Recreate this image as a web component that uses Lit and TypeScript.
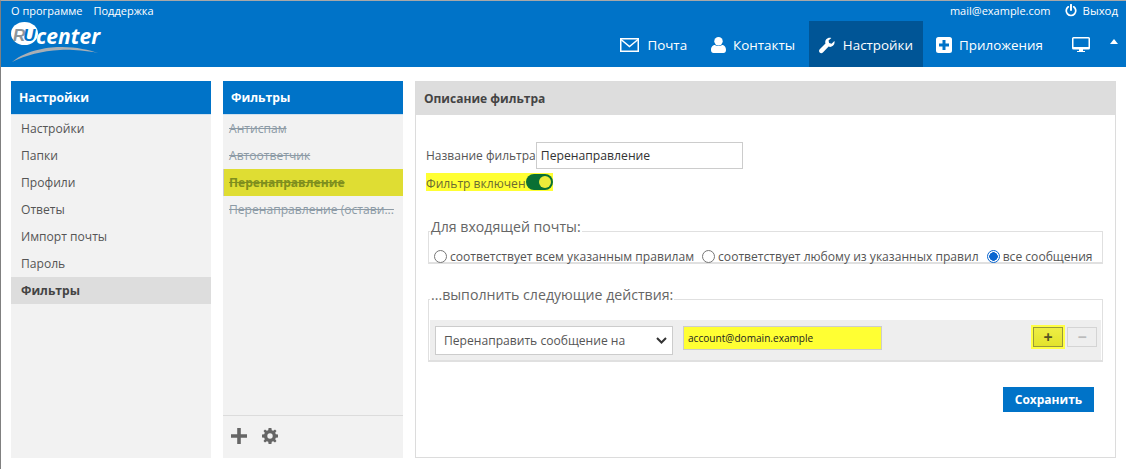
import { LitElement, html, css } from "lit";
import { customElement } from "lit/decorators.js";

const envelope = html`<svg width="19" height="14" viewBox="0 0 19 14"><rect x="0.75" y="0.75" width="17.5" height="12.5" fill="none" stroke="#fff" stroke-width="1.5"/><path d="M1 1.5 L9.5 8.5 L18 1.5" fill="none" stroke="#fff" stroke-width="1.5"/></svg>`;
const person = html`<svg width="15" height="16" viewBox="0 0 15 16"><ellipse cx="7.5" cy="4.2" rx="4.2" ry="4.2" fill="#fff"/><path d="M0 13 C0 9.5 2 8 4 8 C5.5 9.4 9.5 9.4 11 8 C13 8 15 9.5 15 13 C15 15 14 16 12.5 16 H2.5 C1 16 0 15 0 13Z" fill="#fff"/></svg>`;
const wrench = html`<svg width="17" height="17" viewBox="0 0 17 17"><path d="M16.6 3.6 L13.6 6.5 L10.9 5.9 L10.3 3.2 L13.3 0.4 C11.2 -0.3 9 0.3 7.8 1.8 C6.7 3.1 6.4 4.8 7 6.4 L0.8 12.6 C-0.2 13.6 -0.2 15.1 0.7 16 C1.7 17 3.2 17 4.2 16 L10.4 9.7 C12 10.3 13.7 10 15 8.8 C16.5 7.5 17.1 5.5 16.6 3.6Z" fill="#fff"/></svg>`;
const plusBox = html`<svg width="16" height="16" viewBox="0 0 16 16"><path fill-rule="evenodd" d="M2.5 0 H13.5 A2.5 2.5 0 0 1 16 2.5 V13.5 A2.5 2.5 0 0 1 13.5 16 H2.5 A2.5 2.5 0 0 1 0 13.5 V2.5 A2.5 2.5 0 0 1 2.5 0Z M6.5 3 V6.5 H3 V9.5 H6.5 V13 H9.5 V9.5 H13 V6.5 H9.5 V3Z" fill="#fff"/></svg>`;
const monitor = html`<svg width="18" height="16" viewBox="0 0 18 16"><path fill-rule="evenodd" d="M1.5 0 H16.5 A1.5 1.5 0 0 1 18 1.5 V11 A1.5 1.5 0 0 1 16.5 12.5 H11 V14 H13 V15 H5 V14 H7 V12.5 H1.5 A1.5 1.5 0 0 1 0 11 V1.5 A1.5 1.5 0 0 1 1.5 0Z M1.5 1.5 V10 H16.5 V1.5Z" fill="#fff"/></svg>`;
const power = html`<svg width="12" height="13" viewBox="0 0 11 12"><path d="M3 2.6 A4.4 4.4 0 1 0 8 2.6" fill="none" stroke="#fff" stroke-width="1.6" stroke-linecap="round"/><path d="M5.5 0.8 V5.6" stroke="#fff" stroke-width="1.8" stroke-linecap="round"/></svg>`;
const gear = html`<svg width="16" height="16" viewBox="0 0 16 16"><path fill-rule="evenodd" d="M6.6 0 H9.4 L9.8 2.2 L11.2 2.8 L13 1.5 L14.5 3 L13.2 4.8 L13.8 6.2 L16 6.6 V9.4 L13.8 9.8 L13.2 11.2 L14.5 13 L13 14.5 L11.2 13.2 L9.8 13.8 L9.4 16 H6.6 L6.2 13.8 L4.8 13.2 L3 14.5 L1.5 13 L2.8 11.2 L2.2 9.8 L0 9.4 V6.6 L2.2 6.2 L2.8 4.8 L1.5 3 L3 1.5 L4.8 2.8 L6.2 2.2Z M8 5.3 A2.7 2.7 0 1 0 8 10.7 A2.7 2.7 0 1 0 8 5.3Z" fill="#666"/></svg>`;
const bigPlus = html`<svg width="16" height="16" viewBox="0 0 16 16"><path d="M6.2 0 H9.8 V6.2 H16 V9.8 H9.8 V16 H6.2 V9.8 H0 V6.2 H6.2Z" fill="#666"/></svg>`;

const logo = html`<svg class="logo-mark" width="92" height="42" viewBox="0 0 92 42">
  <ellipse cx="14.5" cy="12.5" rx="13.5" ry="11.5" fill="#fff"/>
  <path d="M2 41 C18 28 40 26 52 26 C66 26 80 29 88 32 C72 29 60 28.5 50 29 C32 30 16 34 2 41Z" fill="#a9afb5"/>
</svg>`;

@customElement("app-root")
export class AppRoot extends LitElement {
  static styles = css`
    :host {
      display: block;
      width: 1126px;
      height: 469px;
      box-sizing: border-box;
      background: #fff;
      border-left: 1px solid #808080;
      border-top: 1px solid #a8a8a8;
      font-family: "Open Sans", sans-serif;
      font-size: 12.1px;
      color: #555;
      overflow: hidden;
    }
    .header {
      height: 66px;
      background: #0073c8;
      color: #fff;
      display: flex;
      flex-direction: column;
    }
    .top {
      height: 20px;
      flex: none;
      display: flex;
      align-items: center;
      justify-content: space-between;
      font-size: 11px;
      padding: 0 8px 2px 10px;
      box-sizing: border-box;
    }
    .top-l { display: flex; gap: 11px; }
    .top-r { display: flex; align-items: center; }
    .exit { display: flex; align-items: center; gap: 6px; margin-left: 14px; }
    .exit span { font-size: 11.4px; }
    .main { flex: 1; display: flex; justify-content: space-between; }
    .brand { position: relative; width: 100px; height: 46px; }
    .logo-mark { position: absolute; left: 9px; top: 0; }
    .ru {
      position: absolute; left: 12px; top: 5px;
      font: italic 700 17px "Liberation Sans", sans-serif;
      color: #8d959c; letter-spacing: -2px;
    }
    .ru-u { color: #0073c8; }
    .center {
      position: absolute; left: 35px; top: 1px;
      font: italic 700 21px "Open Sans", sans-serif;
      color: #fff; letter-spacing: 0.1px;
    }
    .nav { display: flex; align-items: stretch; }
    .tab {
      display: flex; align-items: center; gap: 8px;
      font-size: 13.4px;
      padding-top: 2px;
    }
    .tab.mail { margin-right: 24px; }
    .tab.con { margin-right: 14px; gap: 7px; }
    .tab.active { background: #005596; padding: 2px 10px 0; width: 114px; box-sizing: border-box; gap: 8px; white-space: nowrap; }
    .tab.apps { margin-left: 13px; gap: 7px; }
    .mon { display: flex; align-items: center; padding: 2px 0 0 29px; }
    .caret {
      width: 0; height: 0;
      border-left: 4px solid transparent;
      border-right: 4px solid transparent;
      border-bottom: 5px solid #fff;
      margin: 18px 8px 0 20px;
    }
    .body {
      display: flex;
      gap: 12px;
      padding: 14px 9px 0 10px;
      height: 377px;
    }
    .col {
      background: #f2f2f2;
      height: 377px;
      display: flex;
      flex-direction: column;
    }
    .c1 { width: 200px; }
    .c2 { width: 180px; }
    .head {
      height: 32px;
      flex: none;
      background: #0073c8;
      color: #fff;
      font-weight: 700;
      font-size: 12.2px;
      display: flex;
      align-items: center;
      padding: 0 0 1px 8px;
      border-bottom: 1px solid #cfe0ee;
      box-sizing: content-box;
    }
    .list { flex: 1; }
    .item {
      height: 27px;
      display: flex;
      align-items: center;
      padding-left: 10px;
      color: #555;
    }
    .item.sel { background: #dddddd; font-weight: 700; color: #444; }
    .c2 .item {
      padding-left: 6px;
      color: #8d9ba6;
      text-decoration: line-through;
      white-space: nowrap;
    }
    .c2 .item.hl {
      background: #dfdd33;
      color: #7f8f1e;
      font-weight: 700;
      border-left: 1px solid #ccc;
      padding-left: 5px;
    }
    .tools {
      height: 43px;
      flex: none;
      border-top: 1px solid #dcdcdc;
      display: flex;
      align-items: center;
      gap: 15px;
      padding: 0 0 3px 8px;
      box-sizing: border-box;
    }
    .panel {
      width: 701px;
      height: 377px;
      box-sizing: border-box;
      border: 1px solid #dcdcdc;
      display: flex;
      flex-direction: column;
    }
    .phead {
      height: 33px;
      flex: none;
      background: #dddddd;
      color: #444;
      font-weight: 700;
      font-size: 12px;
      display: flex;
      align-items: center;
      padding-left: 8px;
    }
    .pbody { padding: 27px 12px 0 10px; display: flex; flex-direction: column; }
    .name-row { display: flex; align-items: center; height: 27px; font-size: 12px; }
    .name-input {
      width: 207px;
      height: 27px;
      box-sizing: border-box;
      border: 1px solid #ccc;
      font: 12.2px "Open Sans", sans-serif;
      color: #333;
      padding: 0 4px;
      background: #fff;
      outline: none;
    }
    .en-row {
      display: flex;
      align-items: center;
      align-self: flex-start;
      height: 18px;
      margin-top: 4px;
      padding-top: 2px;
      box-sizing: border-box;
      background: #ffff33;
      color: #6b6b33;
    }
    .toggle {
      width: 27px;
      height: 16px;
      border-radius: 8px;
      background: #0a7034;
      position: relative;
      flex: none;
      margin-top: -2px;
    }
    .toggle::after {
      content: "";
      position: absolute;
      right: 2px;
      top: 2px;
      width: 12px;
      height: 12px;
      border-radius: 50%;
      background: #ecec3a;
    }
    fieldset {
      margin: 0;
      padding: 0;
      border: solid #e0e0e0;
      border-width: 1px 1px 2px 1px;
      width: 675px;
      box-sizing: border-box;
      min-inline-size: 0;
    }
    legend {
      font-size: 14.15px;
      line-height: 20px;
      padding: 0 1px 8px;
      margin-left: 1px;
      color: #666;
    }
    .fs1 { margin: 26px 0 0 2px; }
    .fs2 { margin: 21px 0 0 2px; }
    .radios {
      display: flex;
      align-items: center;
      height: 17px;
      box-sizing: border-box;
      padding: 5px 0 0 5px;
      white-space: nowrap;
    }
    .radio {
      width: 13px;
      height: 13px;
      box-sizing: border-box;
      border: 1px solid #777;
      border-radius: 50%;
      background: #fff;
      flex: none;
      margin-right: 3px;
    }
    .radio.on {
      border: 1px solid #0a66d0;
      background: radial-gradient(circle, #0a66d0 0 4px, #fff 4.5px);
    }
    .rl { margin-right: 8px; }
    .action {
      margin: 7px 1px 0;
      height: 40px;
      background: #eeeeee;
      display: flex;
      align-items: flex-start;
      padding-left: 5px;
    }
    .sel-box {
      width: 238px;
      height: 29px;
      margin-top: 6px;
      box-sizing: border-box;
      border: 1px solid #ccc;
      background: #fff;
      display: flex;
      align-items: center;
      justify-content: space-between;
      padding: 0 5px 0 8px;
      color: #555;
    }
    .addr {
      margin: 6px 0 0 10px;
      width: 199px;
      height: 24px;
      box-sizing: border-box;
      border: 1px solid #ccc;
      background: #ffff33;
      font: 10.1px "Open Sans", sans-serif;
      color: #222;
      padding: 0 4px;
      outline: none;
    }
    .btns {
      margin: 7px 4px 0 auto;
      display: flex;
      align-items: center;
      gap: 4px;
    }
    .b {
      width: 30px;
      height: 20px;
      box-sizing: border-box;
      display: flex;
      align-items: center;
      justify-content: center;
      font-weight: 700;
      font-size: 16px;
    }
    .plus {
      background: linear-gradient(#eeee44, #e3e32c);
      border: 1px solid #99993a;
      color: #555522;
      outline: 2px solid #ffff44;
    }
    .minus {
      background: #eeeeee;
      border: 1px solid #d4d4d4;
      color: #bbb;
    }
    .save-row { display: flex; justify-content: flex-end; margin-top: 25px; padding-right: 9px; }
    .save {
      width: 91px;
      height: 25px;
      background: #0073c8;
      color: #fff;
      font-weight: 700;
      font-size: 12px;
      display: flex;
      align-items: center;
      justify-content: center;
    }
  `;

  render() {
    return html`
      <div class="header">
        <div class="top">
          <div class="top-l"><span>О программе</span><span>Поддержка</span></div>
          <div class="top-r">
            <span>mail@example.com</span>
            <span class="exit">${power}<span>Выход</span></span>
          </div>
        </div>
        <div class="main">
          <div class="brand">${logo}<span class="ru">R<span class="ru-u">U</span></span><span class="center">center</span></div>
          <div class="nav">
            <div class="tab mail">${envelope}<span>Почта</span></div>
            <div class="tab con">${person}<span>Контакты</span></div>
            <div class="tab active">${wrench}<span>Настройки</span></div>
            <div class="tab apps">${plusBox}<span>Приложения</span></div>
            <div class="mon">${monitor}</div>
            <div class="caret"></div>
          </div>
        </div>
      </div>
      <div class="body">
        <div class="col c1">
          <div class="head">Настройки</div>
          <div class="list">
            ${["Настройки", "Папки", "Профили", "Ответы", "Импорт почты", "Пароль"].map(
              (t) => html`<div class="item">${t}</div>`
            )}
            <div class="item sel">Фильтры</div>
          </div>
        </div>
        <div class="col c2">
          <div class="head">Фильтры</div>
          <div class="list">
            <div class="item"><span>Антиспам</span></div>
            <div class="item"><span>Автоответчик</span></div>
            <div class="item hl"><span>Перенаправление</span></div>
            <div class="item"><span>Перенаправление (остави...</span></div>
          </div>
          <div class="tools">${bigPlus}${gear}</div>
        </div>
        <div class="panel">
          <div class="phead">Описание фильтра</div>
          <div class="pbody">
            <div class="name-row">
              <span>Название фильтра</span>
              <input class="name-input" .value=${"Перенаправление"} />
            </div>
            <div class="en-row"><span>Фильтр включен</span><span class="toggle"></span></div>
            <fieldset class="fs1">
              <legend>Для входящей почты:</legend>
              <div class="radios">
                <span class="radio"></span><span class="rl">соответствует всем указанным правилам</span>
                <span class="radio"></span><span class="rl">соответствует любому из указанных правил</span>
                <span class="radio on"></span><span>все сообщения</span>
              </div>
            </fieldset>
            <fieldset class="fs2">
              <legend>...выполнить следующие действия:</legend>
              <div class="action">
                <div class="sel-box">
                  <span>Перенаправить сообщение на</span>
                  <svg width="11" height="7" viewBox="0 0 11 7"><path d="M1 1 L5.5 5.5 L10 1" fill="none" stroke="#333" stroke-width="2"/></svg>
                </div>
                <input class="addr" .value=${"account@domain.example"} />
                <div class="btns">
                  <div class="b plus">+</div>
                  <div class="b minus">−</div>
                </div>
              </div>
            </fieldset>
            <div class="save-row"><div class="save">Сохранить</div></div>
          </div>
        </div>
      </div>
    `;
  }
}
